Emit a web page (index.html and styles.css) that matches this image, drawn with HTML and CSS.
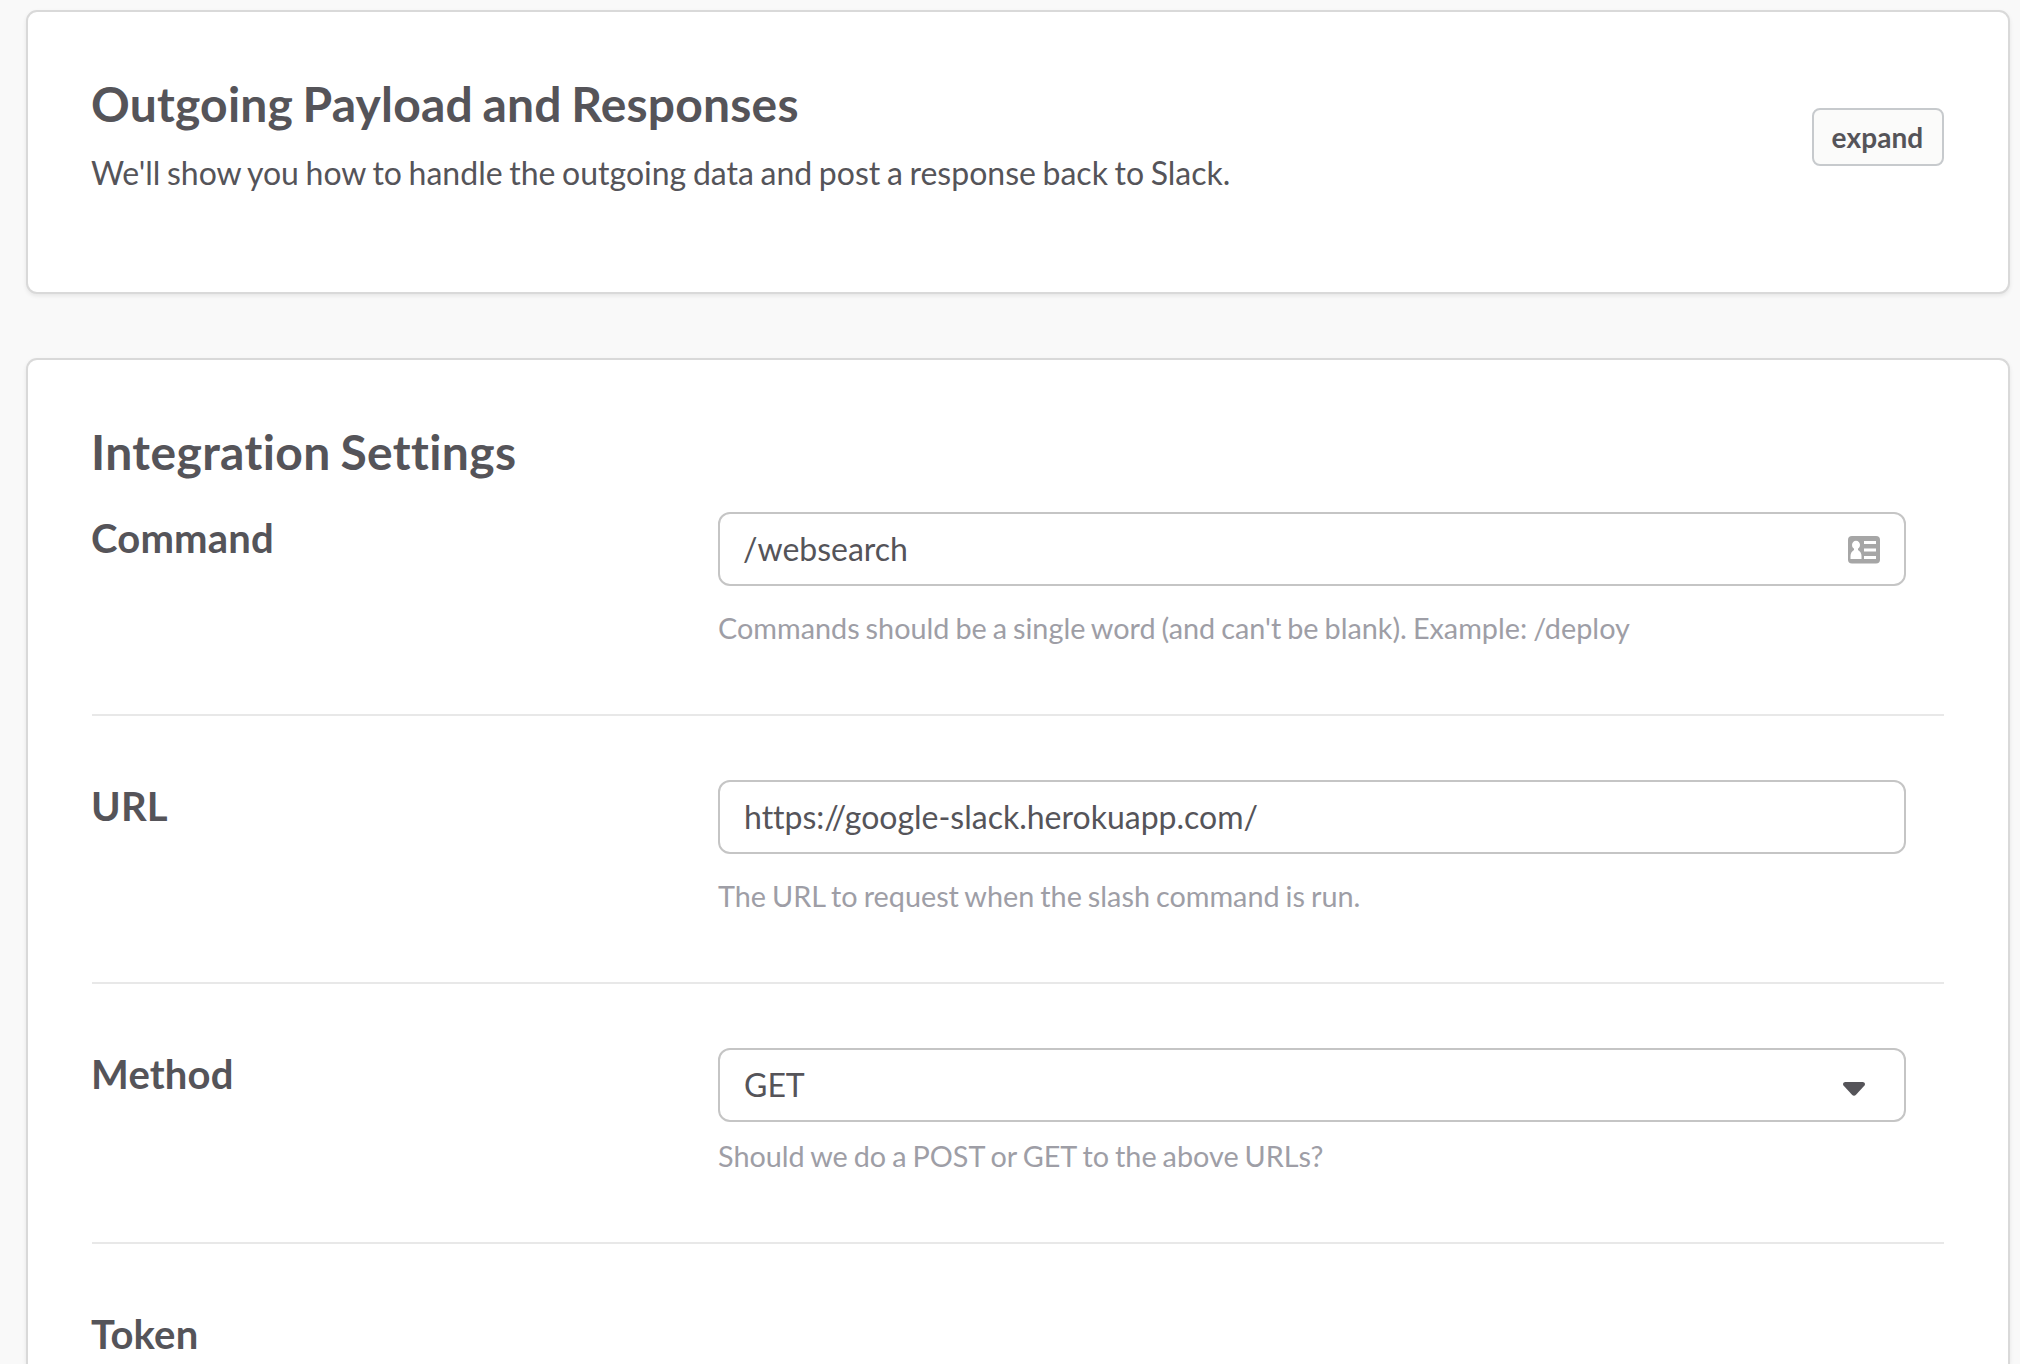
FILE: index.html
```html
<!DOCTYPE html>
<html lang="en">
<head>
<meta charset="utf-8">
<title>Integration Settings</title>
<link rel="stylesheet" href="styles.css">
</head>
<body>
<main class="page">
  <section class="card card-intro">
    <div class="intro-text">
      <h2 class="title">Outgoing Payload and Responses</h2>
      <p class="lead">We'll show you how to handle the outgoing data and post a response back to Slack.</p>
    </div>
    <button class="expand" type="button">expand</button>
  </section>
  <section class="card card-settings">
    <h2 class="title title-settings">Integration Settings</h2>
    <div class="row row-first">
      <h3 class="label">Command</h3>
      <div class="control">
        <div class="field"><span class="value">/websearch</span>
          <svg class="contact" width="32" height="28" viewBox="0 0 32 28"><rect width="32" height="27.500" rx="4" fill="#a6a6a6"/><ellipse cx="8" cy="9" rx="4" ry="4.300" fill="#fff"/><path d="M6 11h4v3q3.500 2 3.500 6v3h-11v-3q0-4 3.500-6zM16 5h12v3H16zM16 12.500h12v3H16zM16 20h12v3H16z" fill="#fff"/></svg>
        </div>
        <p class="hint">Commands should be a single word (and can't be blank). Example: /deploy</p>
      </div>
    </div>
    <div class="row">
      <h3 class="label">URL</h3>
      <div class="control">
        <div class="field"><span class="value">https://google-slack.herokuapp.com/</span></div>
        <p class="hint">The URL to request when the slash command is run.</p>
      </div>
    </div>
    <div class="row row-method">
      <h3 class="label">Method</h3>
      <div class="control">
        <div class="field"><span class="value">GET</span>
          <svg class="caret" width="22" height="14" viewBox="0 0 22 14"><path d="M2 0h18q3 1 1.500 3.500L13 12.800q-2 2-4 0L.5 3.500Q-1 1 2 0z" fill="#555459"/></svg>
        </div>
        <p class="hint">Should we do a POST or GET to the above URLs?</p>
      </div>
    </div>
    <div class="row row-last">
      <h3 class="label">Token</h3>
    </div>
  </section>
</main>
</body>
</html>
```
FILE: styles.css
```css
* { box-sizing: border-box; }
html, body { height: 100%; }
body { margin: 0; background: #f9f9f9; color: #555459; font-family: Lato, sans-serif; font-variant-ligatures: none; overflow: hidden; }
h2, h3, p { margin: 0; }
.page { height: 100%; padding: 10px 10px 0 26px; display: flex; flex-direction: column; overflow: hidden; }
.card { background: #fff; border: 2px solid #d9d9d9; border-radius: 11px; box-shadow: 0 2px 4px rgba(0,0,0,.08); }
.card-intro { flex: none; height: 284px; padding: 62px 64px 0; display: flex; justify-content: space-between; align-items: flex-start; }
.title { margin-left: -1px; font-size: 48px; line-height: 60px; font-weight: 700; letter-spacing: .2px; word-spacing: -2.4px; }
.title-settings { letter-spacing: .38px; }
.lead { margin: 15px 0 0 -1px; font-size: 32px; line-height: 48px; word-spacing: -1.55px; }
.expand { margin-top: 34px; width: 132px; height: 58px; padding: 0 1px 0 0; border: 2px solid #c7cacd; border-radius: 8px; background: #fbfbfa; color: #555459; font: 700 28px/1 Lato, sans-serif; letter-spacing: .1px; }
.card-settings { flex: 1; min-height: 0; margin-top: 64px; padding: 62px 64px 0; border-bottom: 0; border-radius: 11px 11px 0 0; overflow: hidden; }
.row { display: grid; grid-template-columns: 626px 1188px; height: 268px; padding-top: 64px; border-bottom: 2px solid #e8e8e8; }
.row-first { height: 234px; padding-top: 30px; }
.row-method { height: 260px; }
.row-last { height: 120px; border-bottom: 0; }
.label { margin-left: -1px; font-size: 40px; line-height: 52px; font-weight: 700; letter-spacing: .2px; }
.field { height: 74px; border: 2px solid #c5c5c5; border-radius: 12px; padding: 0 24px; display: flex; align-items: center; justify-content: space-between; font-size: 32px; }
.value { margin-top: -2px; }
.row-first .value { margin-left: -1px; }
.hint { color: #9e9ea6; font-size: 28.8px; line-height: 40px; margin-top: 22px; word-spacing: -1.4px; }
.row-method .hint { margin-top: 14px; }
.contact { margin-top: 1px; }
.caret { margin: 7px 15px 0 0; }
```
